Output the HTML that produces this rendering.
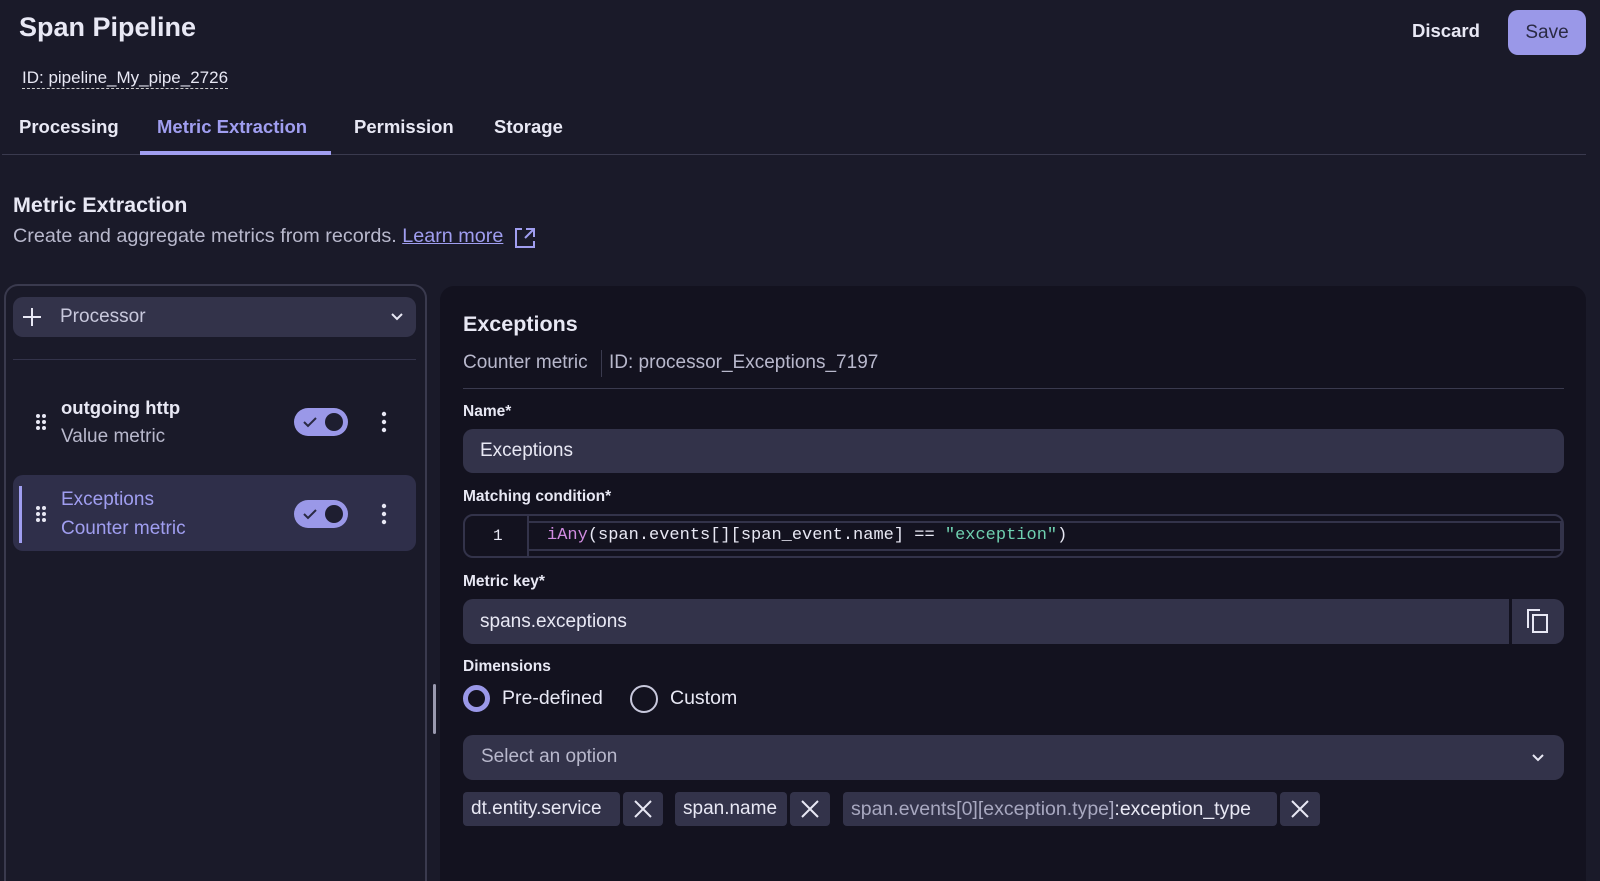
<!DOCTYPE html>
<html><head><meta charset="utf-8"><style>
*{box-sizing:border-box;margin:0;padding:0}
html{width:1600px;height:881px;overflow:hidden}
body{width:1600px;height:881px;background:#1a1a29;color:#e8e8f4;font-family:"Liberation Sans",sans-serif;position:relative;overflow:hidden}
.a{position:absolute;white-space:nowrap}
.b{font-weight:bold}
.in{position:absolute;background:#33334a;border-radius:10px}
.mono{font-family:"Liberation Mono",monospace}
.chip{position:absolute;top:792px;height:34px;background:#33334a;border-radius:4px;font-size:19px;line-height:34px;padding:0 8px;color:#e8e8f4}
</style></head><body>
<div class="a b" style="left:19px;top:12px;font-size:27px">Span Pipeline</div>
<div class="a" style="left:22px;top:68px;font-size:17px;border-bottom:1px dashed #ccc;line-height:20px">ID: pipeline_My_pipe_2726</div>
<div class="a b" style="left:1412px;top:20px;font-size:18.5px;color:#e8e8f4">Discard</div>
<div class="a" style="left:1508px;top:10px;width:78px;height:45px;background:#9a98e8;border-radius:10px;color:#2a2a44;font-size:19px;line-height:45px;text-align:center">Save</div>
<div class="a b" style="left:19px;top:116px;font-size:18.5px">Processing</div>
<div class="a b" style="left:157px;top:116px;font-size:18.5px;color:#a09ef0">Metric Extraction</div>
<div class="a b" style="left:354px;top:116px;font-size:18.5px">Permission</div>
<div class="a b" style="left:494px;top:116px;font-size:18.5px">Storage</div>
<div class="a" style="left:2px;top:154px;width:1584px;height:1px;background:#3a3a4e"></div>
<div class="a" style="left:140px;top:151px;width:191px;height:4px;background:#a09ef0"></div>
<div class="a b" style="left:13px;top:193px;font-size:21.5px">Metric Extraction</div>
<div class="a" style="left:13px;top:225px;font-size:19.8px;color:#b8b8cc">Create and aggregate metrics from records. <span style="color:#a09ef0;text-decoration:underline">Learn more</span></div>
<svg class="a" style="left:514px;top:227px" width="22" height="22" viewBox="0 0 22 22" fill="none" stroke="#a09ef0" stroke-width="2"><path d="M8 2H2v18h18v-6M12 2h8v8M20 2l-9 9"/></svg>
<!-- left panel -->
<div class="a" style="left:4px;top:284px;width:423px;height:597px;border:2px solid #3a3a4e;border-bottom:none;border-radius:14px 14px 0 0"></div>
<div class="in" style="left:13px;top:297px;width:403px;height:40px"></div>
<svg class="a" style="left:22px;top:307px" width="20" height="20" stroke="#e8e8f4" stroke-width="2"><path d="M10 1v18M1 10h18"/></svg>
<div class="a" style="left:60px;top:306px;font-size:19px;color:#c8c8dc">Processor</div>
<svg class="a" style="left:390px;top:312px" width="14" height="10" fill="none" stroke="#e8e8f4" stroke-width="2"><path d="M2 2l5 5 5-5"/></svg>
<div class="a" style="left:13px;top:359px;width:403px;height:1px;background:#33334a"></div>
<div class="a" style="left:13px;top:475px;width:403px;height:76px;background:#2f2f4a;border-radius:10px"></div>
<div class="a" style="left:19px;top:486px;width:3px;height:57px;background:#a09ef0"></div>
<div class="a b" style="left:61px;top:397px;font-size:18.5px">outgoing http</div>
<div class="a" style="left:61px;top:426px;font-size:19px;color:#b8b8cc">Value metric</div>
<div class="a" style="left:61px;top:489px;font-size:19px;color:#a09ef0">Exceptions</div>
<div class="a" style="left:61px;top:518px;font-size:19px;color:#a09ef0">Counter metric</div>
<svg class="a" style="left:35px;top:413px" width="12" height="18" fill="#e8e8f4"><circle cx="3" cy="3" r="2"/><circle cx="9" cy="3" r="2"/><circle cx="3" cy="9" r="2"/><circle cx="9" cy="9" r="2"/><circle cx="3" cy="15" r="2"/><circle cx="9" cy="15" r="2"/></svg>
<svg class="a" style="left:35px;top:505px" width="12" height="18" fill="#e8e8f4"><circle cx="3" cy="3" r="2"/><circle cx="9" cy="3" r="2"/><circle cx="3" cy="9" r="2"/><circle cx="9" cy="9" r="2"/><circle cx="3" cy="15" r="2"/><circle cx="9" cy="15" r="2"/></svg>
<svg class="a" style="left:294px;top:408px" width="54" height="28"><rect width="54" height="28" rx="14" fill="#9a98e8"/><path d="M10 14l4 4 8-8" stroke="#2a2a44" stroke-width="2" fill="none"/><circle cx="40" cy="14" r="9" fill="#1e1e30"/></svg>
<svg class="a" style="left:294px;top:500px" width="54" height="28"><rect width="54" height="28" rx="14" fill="#9a98e8"/><path d="M10 14l4 4 8-8" stroke="#2a2a44" stroke-width="2" fill="none"/><circle cx="40" cy="14" r="9" fill="#1e1e30"/></svg>
<svg class="a" style="left:381px;top:411px" width="6" height="22" fill="#e8e8f4"><circle cx="3" cy="3" r="2.2"/><circle cx="3" cy="11" r="2.2"/><circle cx="3" cy="19" r="2.2"/></svg>
<svg class="a" style="left:381px;top:503px" width="6" height="22" fill="#e8e8f4"><circle cx="3" cy="3" r="2.2"/><circle cx="3" cy="11" r="2.2"/><circle cx="3" cy="19" r="2.2"/></svg>
<div class="a" style="left:433px;top:684px;width:3px;height:50px;background:#9a9ab0;border-radius:2px"></div>
<!-- right panel -->
<div class="a" style="left:440px;top:286px;width:1146px;height:595px;background:#13121f;border-radius:14px 14px 0 0"></div>
<div class="a b" style="left:463px;top:312px;font-size:21.5px">Exceptions</div>
<div class="a" style="left:463px;top:352px;font-size:19px;color:#b8b8cc">Counter metric</div>
<div class="a" style="left:601px;top:350px;width:1px;height:27px;background:#3a3a4e"></div>
<div class="a" style="left:609px;top:352px;font-size:19px;color:#b8b8cc">ID: processor_Exceptions_7197</div>
<div class="a" style="left:463px;top:388px;width:1101px;height:1px;background:#3a3a4e"></div>
<div class="a b" style="left:463px;top:403px;font-size:15.5px">Name*</div>
<div class="in" style="left:463px;top:429px;width:1101px;height:44px"></div>
<div class="a" style="left:480px;top:440px;font-size:19px">Exceptions</div>
<div class="a b" style="left:463px;top:488px;font-size:15.5px">Matching condition*</div>
<div class="a" style="left:463px;top:514px;width:1101px;height:44px;border:2px solid #33334a;border-radius:10px"></div>
<div class="a" style="left:527px;top:514px;width:2px;height:44px;background:#33334a"></div>
<div class="a" style="left:529px;top:521px;width:1033px;height:30px;border:2px solid #33334a;border-left:none"></div>
<div class="a mono" style="left:493px;top:527px;font-size:16px">1</div>
<div class="a mono" style="left:547px;top:526px;font-size:17px"><span style="color:#d08be0">iAny</span>(span.events[][span_event.name] == <span style="color:#6fd0b0">"exception"</span>)</div>
<div class="a b" style="left:463px;top:573px;font-size:15.5px">Metric key*</div>
<div class="in" style="left:463px;top:599px;width:1046px;height:45px;border-radius:10px 0 0 10px"></div>
<div class="in" style="left:1512px;top:599px;width:52px;height:45px;border-radius:0 10px 10px 0"></div>
<svg class="a" style="left:1527px;top:609px" width="24" height="26" fill="none" stroke="#e8e8f4" stroke-width="2"><path d="M1 19V1h12"/><rect x="6" y="6" width="14" height="17"/></svg>
<div class="a" style="left:480px;top:611px;font-size:19px">spans.exceptions</div>
<div class="a b" style="left:463px;top:658px;font-size:15.5px">Dimensions</div>
<div class="a" style="left:463px;top:685px;width:27px;height:27px;border:5px solid #9a98e8;border-radius:50%"></div>
<div class="a" style="left:502px;top:687px;font-size:19.5px">Pre-defined</div>
<div class="a" style="left:630px;top:685px;width:28px;height:28px;border:2px solid #c8c8dc;border-radius:50%"></div>
<div class="a" style="left:670px;top:687px;font-size:19.5px">Custom</div>
<div class="in" style="left:463px;top:735px;width:1101px;height:45px"></div>
<div class="a" style="left:481px;top:746px;font-size:19px;color:#b8b8cc">Select an option</div>
<svg class="a" style="left:1531px;top:753px" width="14" height="10" fill="none" stroke="#e8e8f4" stroke-width="2"><path d="M2 2l5 5 5-5"/></svg>
<div class="chip" style="left:463px;width:157px">dt.entity.service</div>
<div class="chip" style="left:623px;width:40px"></div>
<div class="chip" style="left:675px;width:112px">span.name</div>
<div class="chip" style="left:790px;width:40px"></div>
<div class="chip" style="left:843px;width:434px;font-size:19.5px"><span style="color:#a8a8c0">span.events[0][exception.type]</span>:exception_type</div>
<div class="chip" style="left:1280px;width:40px"></div>
<svg class="a" style="left:634px;top:800px" width="18" height="18" stroke="#e8e8f4" stroke-width="2"><path d="M1 1l16 16M17 1L1 17"/></svg>
<svg class="a" style="left:801px;top:800px" width="18" height="18" stroke="#e8e8f4" stroke-width="2"><path d="M1 1l16 16M17 1L1 17"/></svg>
<svg class="a" style="left:1291px;top:800px" width="18" height="18" stroke="#e8e8f4" stroke-width="2"><path d="M1 1l16 16M17 1L1 17"/></svg>
</body></html>
